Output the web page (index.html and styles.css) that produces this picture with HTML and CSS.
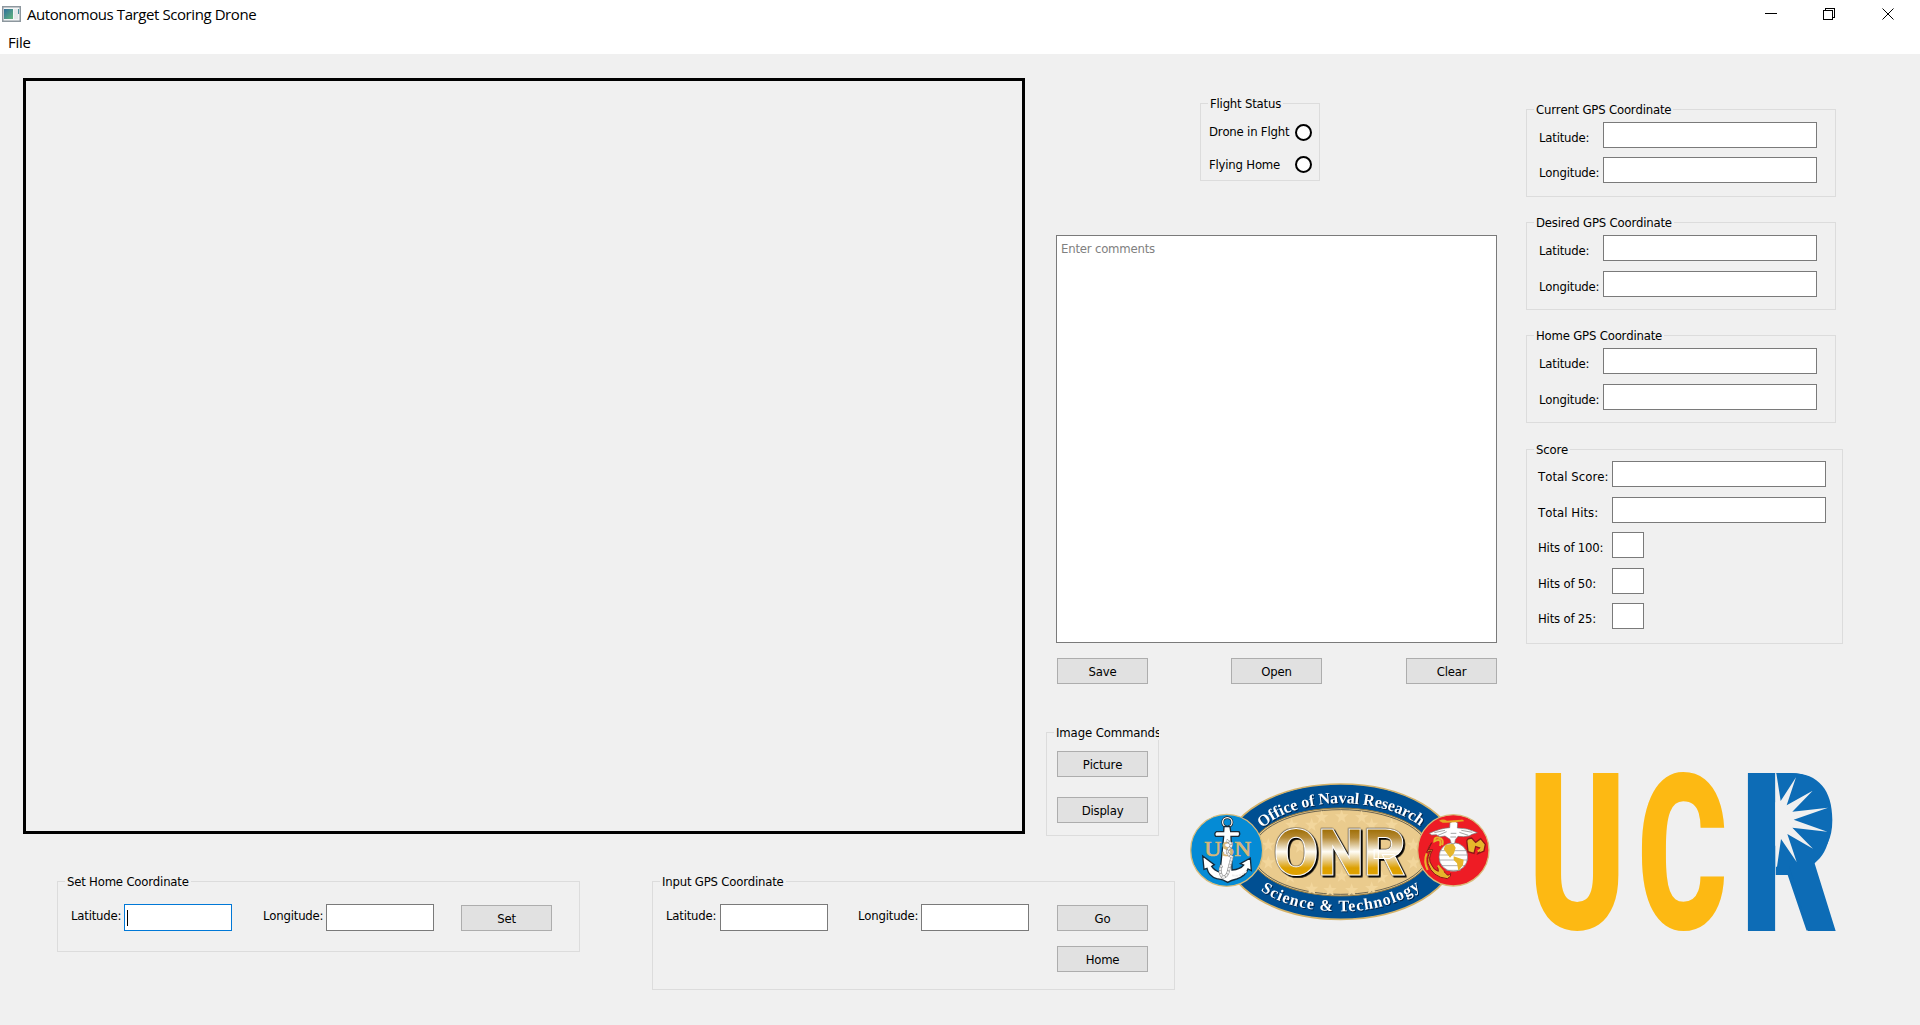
FILE: index.html
```html
<!DOCTYPE html>
<html lang="en">
<head>
<meta charset="utf-8">
<title>Autonomous Target Scoring Drone</title>
<link rel="stylesheet" href="styles.css">
</head>
<body>
<header class="titlebar">
  <svg class="app-icon" width="19" height="16" viewBox="0 0 19 16">
    <defs><linearGradient id="appFill" x2="1" y2="1"><stop offset="0" stop-color="#2f6f9c"/><stop offset="1" stop-color="#62b77c"/></linearGradient></defs>
    <rect x=".75" y=".75" width="17.5" height="14.5" fill="#f4f5f6" stroke="#8d979e" stroke-width="1.5"/>
    <rect x="2" y="3" width="9" height="10" fill="url(#appFill)"/>
    <rect x="12" y="3" width="4" height="10" fill="#e4e8ea"/><rect x="16" y="3" width="1" height="5" fill="#4b92a0"/>
  </svg>
  <h1 class="title">Autonomous Target Scoring Drone</h1>
  <svg class="window-controls" width="130" height="14" viewBox="0 0 130 14" fill="none" stroke="#000" shape-rendering="crispEdges">
    <path d="M0 6.5h12M60.5 3.5V1.500h9v9h-2M58.500 3.500h9v9h-9z"/>
    <path d="M117.500 1.500l11 11M128.500 1.500l-11 11" stroke-width="1" shape-rendering="auto"/>
  </svg>
</header>
<nav class="menubar"><span>File</span></nav>

<main class="window">
  <div class="workspace">
    <div class="upper">
      <div class="video"></div>
      <div class="middle">
        <section class="group flight">
          <h2>Flight Status</h2>
          <div class="status"><span>Drone in Flght</span><i class="lamp"></i></div>
          <div class="status home"><span>Flying Home</span><i class="lamp"></i></div>
        </section>
        <div class="comments">Enter comments</div>
        <div class="file-actions"><button>Save</button><button>Open</button><button>Clear</button></div>
        <div class="lower">
          <section class="group image-commands">
            <h2>Image Commands</h2>
            <button>Picture</button>
            <button>Display</button>
          </section>
          <svg class="onr" width="320" height="160" viewBox="0 0 960 480">
            <defs>
              <linearGradient id="goldText" gradientUnits="userSpaceOnUse" x1="0" y1="-140" x2="0" y2="0">
                <stop offset="0" stop-color="#9c6b00"/><stop offset=".2" stop-color="#b58a35"/><stop offset=".5" stop-color="#fffdf6"/><stop offset=".67" stop-color="#e9cf92"/><stop offset=".85" stop-color="#dda000"/><stop offset="1" stop-color="#e0a200"/>
              </linearGradient>
              <clipPath id="field"><ellipse cx="482" cy="246" rx="270" ry="130"/></clipPath>
              <path id="star" d="M0-21 5-7 20-7 8 3 12 18 0 9-12 18-8 3-20-7-5-7z"/>
              <path id="arcTop" d="M236 184Q320 103 482 99Q652 103 738 184"/>
              <path id="arcBottom" d="M231 354Q325 424 482 424Q640 424 741 341"/>
            </defs>
            <ellipse cx="482" cy="245" rx="346" ry="203" fill="#004f92" stroke="#d4b268" stroke-width="5"/>
            <ellipse cx="482" cy="246" rx="270" ry="132" fill="#eacb8d" stroke="#8a7440" stroke-width="3"/>
            <ellipse cx="482" cy="246" rx="264" ry="127" fill="none" stroke="#2c3030" stroke-width="2"/>
            <g fill="#f2d69c" clip-path="url(#field)">
              <use href="#star" x="425" y="142"/><use href="#star" x="485" y="140"/><use href="#star" x="545" y="142"/>
              <use href="#star" x="335" y="165"/><use href="#star" x="395" y="165"/><use href="#star" x="575" y="165"/><use href="#star" x="635" y="165"/>
              <use href="#star" x="265" y="225"/><use href="#star" x="360" y="230"/><use href="#star" x="450" y="220"/><use href="#star" x="700" y="225"/>
              <use href="#star" x="265" y="278"/><use href="#star" x="455" y="280"/><use href="#star" x="700" y="278"/>
              <use href="#star" x="330" y="320"/><use href="#star" x="485" y="318"/><use href="#star" x="605" y="322"/>
              <use href="#star" x="395" y="357"/><use href="#star" x="450" y="361"/><use href="#star" x="515" y="361"/><use href="#star" x="575" y="355"/>
            </g>
            <g class="onr-letters" transform="translate(281 315)">
              <text x="0" y="0" textLength="397" lengthAdjust="spacingAndGlyphs" fill="url(#goldText)">ONR</text>
            </g>
            <g class="arc-text">
              <text textLength="505"><textPath href="#arcTop" startOffset="14">Office of Naval Research</textPath></text>
              <text textLength="505"><textPath href="#arcBottom" startOffset="13">Science &amp; Technology</textPath></text>
            </g>
            <circle cx="140" cy="241" r="108" fill="#058bd5" stroke="#d9bd7c" stroke-width="4"/>
            <circle cx="142" cy="157" r="14" fill="none" stroke="#222" stroke-width="8"/><circle cx="142" cy="157" r="14" fill="none" stroke="#fff" stroke-width="4"/>
            <path d="M132 170h18l2 15h25q5 7-1 14h-23l3 101q25-2 35-15l-10-4 30-17 3 38-10-5q-7 21-34 30-17 4-27 10-13-9-33-11-24-8-29-31l-9 3 -4-40 35 26-8 5q8 12 25 18l11-108h-24q-6-8 2-14h22z" fill="#fff" stroke="#172b3a" stroke-width="4"/>
            <text x="73" y="258" class="usn" textLength="141" lengthAdjust="spacingAndGlyphs">USN</text>
            <path d="M139 211q24 12 9 24t8 26l-9 35q-5 27-20 25-12-17-2-35" fill="none" stroke="#888" stroke-width="9"/><path d="M139 211q24 12 9 24t8 26l-9 35q-5 27-20 25-12-17-2-35M156 316q25 6 43-13" fill="none" stroke="#eee" stroke-width="6" stroke-dasharray="8 2"/>
            <circle cx="820" cy="241" r="107" fill="#ee1c25" stroke="#d9bd7c" stroke-width="4"/>
            <path d="M755 218l-10 22 13-1q-17 28-3 46 6 15 20 19l-2-19 24 25q7 11 15 0 3 10-10 16-45-4-58-45-3-25 9-38l-13 4q8-21 15-29z" fill="#e6b62b" stroke="#8b1717" stroke-width="3"/>
            <path d="M861 219q-4-14 14-15l12 13 15-11 14 17-4 20-18 8 9-16-16-5-5 20-18-5z" fill="#e6b62b" stroke="#8b1717" stroke-width="4"/>
            <path d="M780 228q7-26-17-14 0-14 13-11 17 3 11 23M740 250q-10 24 3 50M900 213q15 20-7 31M773 286l17 20" fill="none" stroke="#e6b62b" stroke-width="6"/>
            <circle cx="820" cy="261" r="43" fill="#fff" stroke="#777" stroke-width="2"/>
            <path d="M780 242h80M777 255h86M777 270h86M783 287h74M797 301h45" stroke="#888" stroke-width="2"/>
            <path d="M797 224l23-3 7 12-5 17-12 13-19-26zM821 259l30 10-2 16-14 17-4-22-10-10z" fill="#e6b62b"/>
            <path d="M748 190q35-16 61-17l1-15 12-6 11 7-1 15q31-1 60 14l-16 5-9 5-16 2-17-1-8 10-2 12h-10l-4-13-15-10-16 2-10-6-14 1z" fill="#fff" stroke="#777" stroke-width="2"/>
            <path d="M763 188l32-7M774 196l26-11M844 181l33 6M838 187l27 9M812 190h17M811 201h17" fill="none" stroke="#777" stroke-width="2"/>
            <path d="M777 152q12-7 24 0l43-3q7-1 8 5-32 5-64 4z" fill="#e6a621"/>
          </svg>
        </div>
      </div>
    </div>
    <div class="forms">
      <section class="group coordinate-form">
        <h2>Set Home Coordinate</h2>
        <div class="form-row">
          <label class="lat">Latitude:</label><div class="field focused"><i class="caret"></i></div>
          <label class="long">Longitude:</label><div class="field"></div>
          <div class="form-buttons"><button>Set</button></div>
        </div>
      </section>
      <section class="group coordinate-form input-gps">
        <h2>Input GPS Coordinate</h2>
        <div class="form-row">
          <label class="lat">Latitude:</label><div class="field"></div>
          <label class="long">Longitude:</label><div class="field"></div>
          <div class="form-buttons"><button>Go</button><button>Home</button></div>
        </div>
      </section>
    </div>
  </div>

  <aside class="readouts">
    <section class="group gps current">
      <h2>Current GPS Coordinate</h2>
      <div class="row"><label>Latitude:</label><div class="field"></div></div>
      <div class="row"><label>Longitude:</label><div class="field"></div></div>
    </section>
    <section class="group gps">
      <h2>Desired GPS Coordinate</h2>
      <div class="row"><label>Latitude:</label><div class="field"></div></div>
      <div class="row"><label>Longitude:</label><div class="field"></div></div>
    </section>
    <section class="group gps">
      <h2>Home GPS Coordinate</h2>
      <div class="row"><label>Latitude:</label><div class="field"></div></div>
      <div class="row"><label>Longitude:</label><div class="field"></div></div>
    </section>
    <section class="group score">
      <h2>Score</h2>
      <div class="row total"><label>Total Score:</label><div class="field"></div></div>
      <div class="row total"><label>Total Hits:</label><div class="field"></div></div>
      <div class="row tight"><label>Hits of 100:</label><div class="field small"></div></div>
      <div class="row"><label>Hits of 50:</label><div class="field small"></div></div>
      <div class="row tight"><label>Hits of 25:</label><div class="field small"></div></div>
    </section>
    <svg class="ucr" width="330" height="180" viewBox="0 0 990 540">
      <g class="ucr-letters">
        <text transform="translate(24 506) scale(.667 .99)" fill="#fdb913">U</text>
        <text transform="translate(352 506) scale(.622 .98)" fill="#fdb913">C</text>
        <text transform="translate(659 513) scale(.68 1)" fill="#0d6cb6">R</text>
      </g>
      <!-- solid stem, bowl and leg behind the sunburst -->
      <rect x="684" y="40" width="82" height="473" fill="#0d6cb6"/>
      <path d="M768 40h48C895 40 937 91 937 180Q937 262 880 298L947 513H864L808 318H768z" fill="#0d6cb6"/>
      <path d="M766 40h3l13 83 46-71-28 84 78-44-61 63 107-12-103 36 101 36-105-12 62 63-77-44 28 84-47-69-12 83h-3z" fill="#f0f0f0"/>
      <rect x="766" y="38" width="2" height="476" fill="#f0f0f0"/>
    </svg>
  </aside>
</main>
</body>
</html>
```
FILE: styles.css
```css
* { box-sizing: border-box; }
body {
  margin: 0;
  width: 1920px;
  height: 1025px;
  overflow: hidden;
  background: #f0f0f0;
  color: #000;
  font: 13px/16px "DejaVu Sans Condensed", "DejaVu Sans", sans-serif;
  font-stretch: condensed;
  font-kerning: none;
  letter-spacing: -.2px;
}
h1, h2 { margin: 0; font: inherit; }

.titlebar {
  display: flex;
  align-items: flex-start;
  height: 30px;
  padding: 6px 25px 0 2px;
  background: #fff;
}
.title {
  margin: -3px auto 0 6px;
  font: 15px/22px "Open Sans", sans-serif;
  letter-spacing: -.42px;
  white-space: nowrap;
}
.window-controls { margin-top: 1px; }
.menubar {
  height: 24px;
  padding-left: 8px;
  background: #fff;
  font: 15px/24px "Open Sans", sans-serif;
  letter-spacing: -.3px;
}

.window { display: flex; height: 971px; }
.workspace { width: 1526px; padding: 24px 0 0 23px; }
.upper { display: flex; height: 756px; }
.video { width: 1002px; height: 756px; border: 3px solid #000; }
.middle { width: 501px; padding: 25px 0 0 21px; }

.group { border: 1px solid #dcdcdc; }
.group h2 {
  width: max-content;
  height: 16px;
  margin: -9px 0 0 7px;
  padding: 1px 2px 0;
  background: #f0f0f0;
  white-space: nowrap;
}
button {
  display: block;
  width: 91px;
  height: 26px;
  padding: 1px 0 0;
  border: 1px solid #adadad;
  background: #e1e1e1;
  color: #000;
  font: inherit;
  font-kerning: none;
  letter-spacing: inherit;
  line-height: 23px;
  text-align: center;
}
.field { flex: none; border: 1px solid #7a7a7a; background: #fff; }
.field.focused { padding: 5px 0 0 2px; border-color: #0078d7; }
.caret { display: block; width: 1px; height: 16px; background: #000; }

.flight { width: 120px; height: 78px; margin-left: 154px; }
.flight h2 { margin-bottom: 13px; }
.status {
  display: flex;
  justify-content: space-between;
  height: 17px;
  margin-bottom: 15px;
  padding: 0 7px 0 8px;
  line-height: 15px;
  white-space: nowrap;
}
.status.home { line-height: 17px; }
.lamp { width: 17px; height: 17px; border: 2px solid #000; border-radius: 50%; background: #fff; }

.comments {
  width: 441px;
  height: 408px;
  margin: 54px 0 0 10px;
  padding: 5px 4px;
  border: 1px solid #7a7a7a;
  background: #fff;
  color: #808080;
}
.file-actions { display: grid; grid-template-columns: 174px 175px 91px; margin: 15px 0 0 11px; }
.lower { display: flex; align-items: flex-start; margin-top: 48px; }
.image-commands { width: 113px; height: 104px; }
.image-commands h2 { width: 105px; padding-right: 0; overflow: hidden; letter-spacing: -.12px; }
.image-commands button { margin: 11px 0 0 10px; }
.image-commands button + button { margin-top: 20px; }
.onr { flex: none; margin: 38px 0 0 21px; letter-spacing: 0; }
.onr-letters {
  font: 900 194px Roboto, sans-serif;
  stroke: #fff;
  stroke-width: 3px;
  filter: drop-shadow(5px 5px 0 #000) drop-shadow(-1px -1px 0 #222);
}
.arc-text { font: bold 48px "Liberation Serif", serif; fill: #fff; filter: drop-shadow(3px 3px 0 #00254d); }
.usn { font: 62px "Liberation Serif", serif; fill: #d9b778; stroke: #d9b778; stroke-width: 2px; }

.forms { display: flex; gap: 72px; padding: 47px 0 0 34px; }
.coordinate-form { width: 523px; height: 71px; }
.coordinate-form.input-gps { height: 109px; }
.form-row { display: flex; align-items: flex-start; margin-top: 15px; }
.form-row label { padding-left: 13px; line-height: 24px; white-space: nowrap; }
.form-row .lat { width: 66px; }
.form-row .long { width: 94px; padding-left: 31px; }
.form-row .field { width: 108px; height: 27px; }
.form-buttons { display: grid; gap: 15px; margin: 1px 0 0 27px; }
.input-gps .lat { width: 67px; }
.input-gps .long { width: 93px; padding-left: 30px; }
.input-gps .form-buttons { margin-left: 28px; }

.readouts { width: 394px; padding-top: 55px; }
.gps { width: 310px; height: 88px; margin-bottom: 25px; }
.row { display: flex; margin-top: 10px; }
.row label { width: 76px; padding: 3px 0 0 12px; line-height: 26px; white-space: nowrap; height: 26px; }
.row .field { width: 214px; height: 26px; }
.group h2 + .row { margin-top: 5px; }
.current .row + .row, .row.tight { margin-top: 9px; }
.score { width: 317px; height: 195px; margin-top: 26px; }
.score h2 + .row { margin-top: 4px; }
.score .row label { width: 85px; padding-left: 11px; }
.row.total label { letter-spacing: .05px; }
.row .field.small { width: 32px; }
.ucr { display: block; margin: 116px 0 0 -6px; overflow: visible; letter-spacing: 0; }
.ucr-letters { font: 900 665px Roboto, sans-serif; }
```
